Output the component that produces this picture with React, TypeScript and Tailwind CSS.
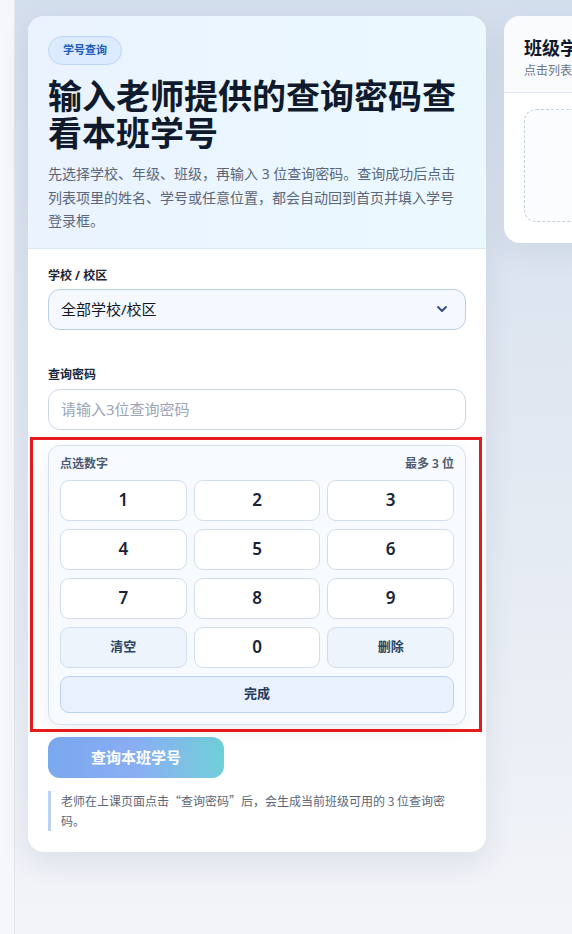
import { useState } from "react";

const keys = ["1", "2", "3", "4", "5", "6", "7", "8", "9"];

function Keypad({ onKey }: { onKey: (k: string) => void }) {
  return (
    <div className="rounded-xl border border-[#d3dfee] bg-[#f7faff] px-[11px] pt-[9px] pb-[11px] shadow-[0_6px_18px_rgba(30,58,100,0.08)]">
      <div className="flex items-center justify-between text-[12px] leading-[18px] font-semibold text-[#4b5a70]">
        <span>点选数字</span>
        <span>最多 3 位</span>
      </div>
      <div className="mt-[7px] grid grid-cols-3 gap-x-[7px] gap-y-2">
        {keys.map((k) => (
          <button
            key={k}
            onClick={() => onKey(k)}
            className="h-[41px] rounded-[9px] border border-[#d2deed] bg-white text-[17px] font-semibold text-[#16233a]"
          >
            {k}
          </button>
        ))}
        <button
          onClick={() => onKey("clear")}
          className="h-[41px] rounded-[9px] border border-[#d2deed] bg-[#eef4fc] text-[13px] font-bold text-[#2c4463]"
        >
          清空
        </button>
        <button
          onClick={() => onKey("0")}
          className="h-[41px] rounded-[9px] border border-[#d2deed] bg-white text-[17px] font-semibold text-[#16233a]"
        >
          0
        </button>
        <button
          onClick={() => onKey("del")}
          className="h-[41px] rounded-[9px] border border-[#d2deed] bg-[#eef4fc] text-[13px] font-bold text-[#2c4463]"
        >
          删除
        </button>
        <button className="col-span-3 h-[37px] rounded-[9px] border border-[#b9d3f3] bg-[#e9f1fd] text-[13px] font-bold text-[#1f3a5e]">
          完成
        </button>
      </div>
    </div>
  );
}

export default function App() {
  const [code, setCode] = useState("");

  const handleKey = (k: string) => {
    if (k === "clear") return setCode("");
    if (k === "del") return setCode((c) => c.slice(0, -1));
    setCode((c) => (c.length < 3 ? c + k : c));
  };

  return (
    <div
      className="flex min-h-[934px] w-full overflow-hidden"
      style={{ fontFamily: '"Noto Sans", "Noto Sans CJK SC", sans-serif' }}
    >
      {/* sidebar edge */}
      <div className="w-[15px] shrink-0 border-r border-[#e1e5ec] bg-[#f6f7fa]" />

      <main className="flex flex-1 items-start gap-[18px] bg-gradient-to-b from-[#d4dfee] via-[#e3e9f2] to-[#f2f4f8] pt-4 pl-[13px]">
        {/* query card */}
        <section className="w-[458px] shrink-0 overflow-hidden rounded-2xl bg-white shadow-[0_10px_30px_rgba(40,60,100,0.10)]">
          <header className="border-b border-[#dbe6f3] bg-gradient-to-r from-[#eaf3ff] to-[#ebf9ff] px-5 pt-5 pb-[15px]">
            <span className="inline-flex h-[29px] items-center rounded-full border border-[#bcd7f8] bg-[#dcebfd] px-[14px] text-[11px] font-bold text-[#1d5bb8]">
              学号查询
            </span>
            <h1 className="mt-[13px] text-[34px] leading-[37px] font-bold text-[#0f1a2c]">
              输入老师提供的查询密码查看本班学号
            </h1>
            <p className="mt-[10px] text-[14px] leading-[23.5px] text-[#5b6679]">
              先选择学校、年级、班级，再输入 3 位查询密码。查询成功后点击列表项里的姓名、学号或任意位置，都会自动回到首页并填入学号登录框。
            </p>
          </header>

          <div className="px-5 pt-[19px] pb-[21px]">
            <label className="block text-[12px] leading-4 font-bold text-[#1c2638]">学校 / 校区</label>
            <div className="mt-[5px] flex h-[41px] items-center justify-between rounded-xl border border-[#b8cee9] bg-[#f5f9ff] pr-[18px] pl-3">
              <span className="text-[15px] text-[#101828]">全部学校/校区</span>
              <svg width="10" height="6" viewBox="0 0 10 6" fill="none">
                <path d="M1 1l4 4 4-4" stroke="#2f4b78" strokeWidth="1.8" strokeLinecap="round" strokeLinejoin="round" />
              </svg>
            </div>

            <label className="mt-[37px] block text-[12px] leading-4 font-bold text-[#1c2638]">查询密码</label>
            <div className="mt-[6px] flex h-[41px] items-center rounded-xl border border-[#cbd6e4] bg-white px-3">
              <span className={code ? "text-[15px] text-[#101828]" : "text-[15px] text-[#9aa5b5]"}>
                {code || "请输入3位查询密码"}
              </span>
            </div>

            <div className="relative mt-[15px]">
              <Keypad onKey={handleKey} />
              <div className="pointer-events-none absolute -top-2 -right-4 -bottom-[7px] -left-[18px] border-[3px] border-[#e31b1b]" />
            </div>

            <button className="mt-3 h-[41px] w-[176px] rounded-xl bg-gradient-to-r from-[#7aa8ee] via-[#8aaef4] to-[#70cfd8] text-[15px] font-bold text-white">
              查询本班学号
            </button>

            <p className="mt-[13px] border-l-[3px] border-[#b8d2f4] pl-[10px] font-['Noto_Sans_CJK_SC',sans-serif] text-[12px] leading-[20px] text-[#5b6679]">
              老师在上课页面点击“查询密码”后，会生成当前班级可用的 3 位查询密码。
            </p>
          </div>
        </section>

        {/* result card */}
        <section className="w-[320px] shrink-0 overflow-hidden rounded-2xl bg-white shadow-[0_10px_30px_rgba(40,60,100,0.08)]">
          <header className="border-b border-[#e1e7ef] bg-[#fafbfd] px-5 pt-[21px] pb-[13px]">
            <h2 className="text-[18px] leading-[22px] font-bold text-[#0f1a2c]">班级学号列表</h2>
            <p className="mt-[4px] text-[12px] leading-4 text-[#6b7586]">点击列表项即可回填学号登录框</p>
          </header>
          <div className="px-5 pt-4 pb-[21px]">
            <div className="h-[113px] rounded-xl border border-dashed border-[#c5d0de] bg-[#fbfcfe]" />
          </div>
        </section>
      </main>
    </div>
  );
}
